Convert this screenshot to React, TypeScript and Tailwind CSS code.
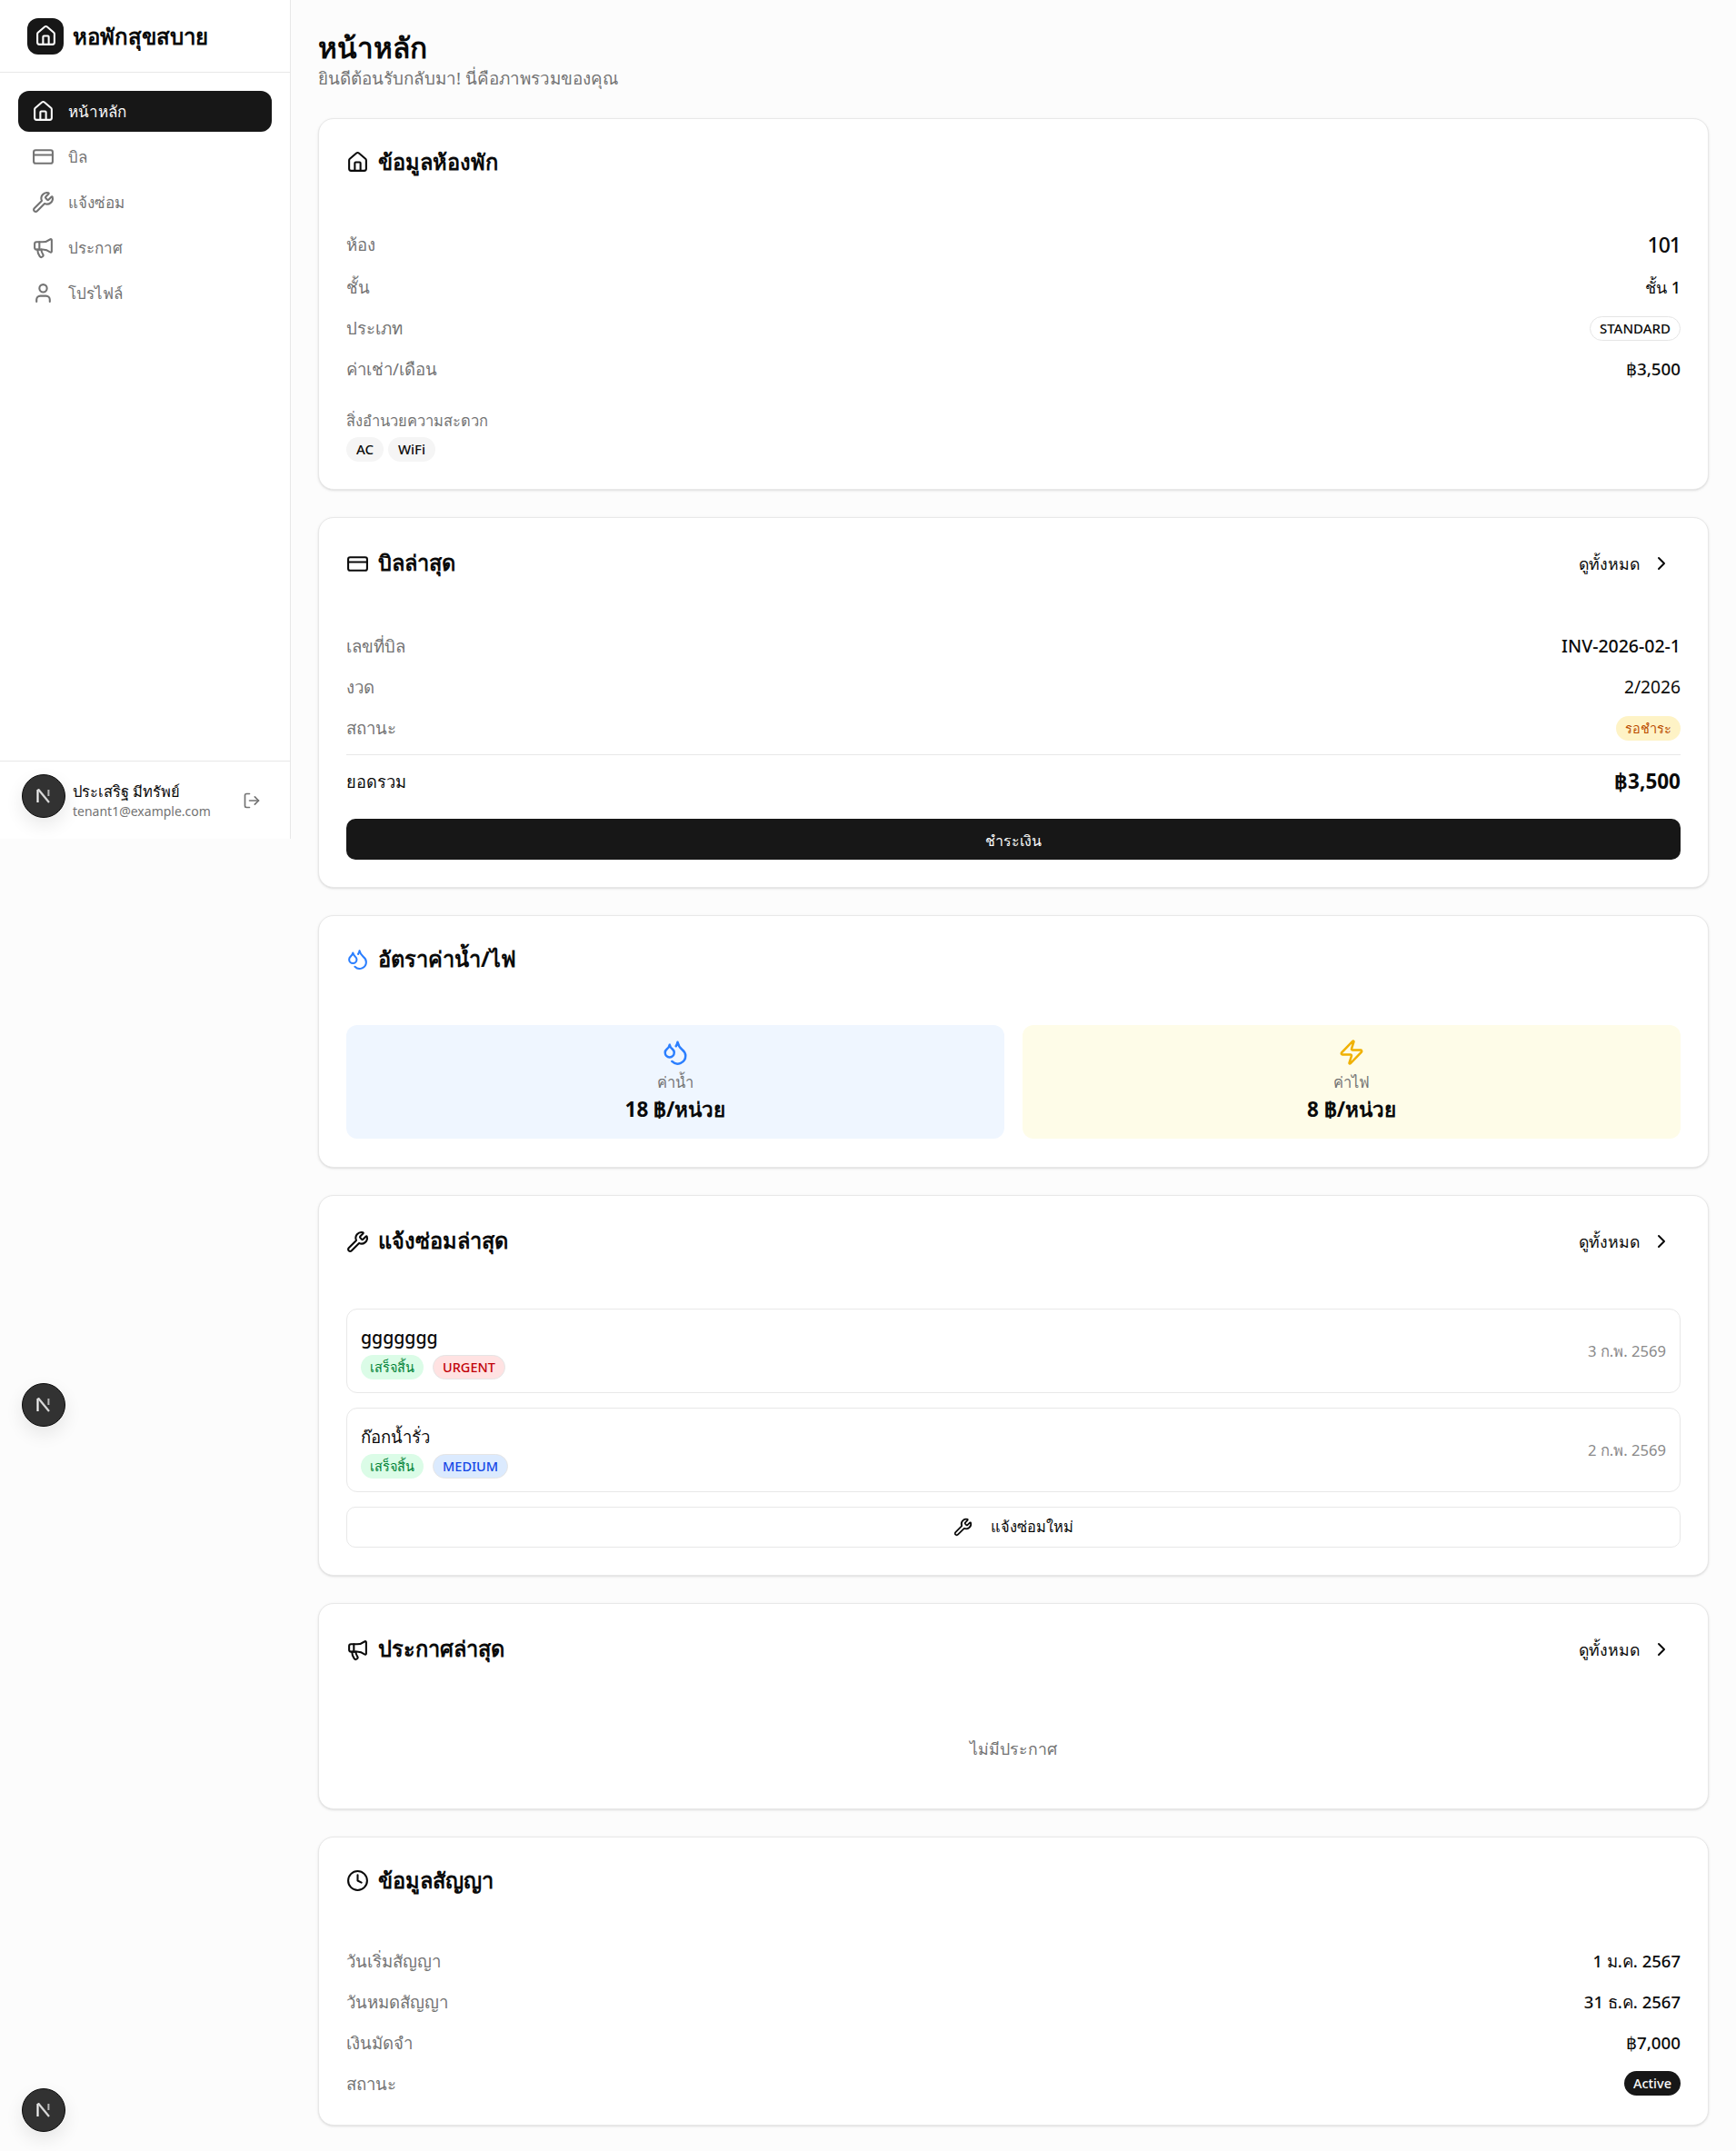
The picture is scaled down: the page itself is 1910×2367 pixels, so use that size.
import React from 'react';
import { House, CreditCard, Wrench, Megaphone, User, Droplets, Zap, Clock, ChevronRight, LogOut } from 'lucide-react';

const nav = [
  { label: 'หน้าหลัก', icon: House, active: true },
  { label: 'บิล', icon: CreditCard },
  { label: 'แจ้งซ่อม', icon: Wrench },
  { label: 'ประกาศ', icon: Megaphone },
  { label: 'โปรไฟล์', icon: User },
];

function NextBadge({ className }: { className: string }) {
  return (
    <div className={`absolute flex h-[48px] w-[48px] items-center justify-center rounded-full border border-[#0c0c0c] bg-[#323232] shadow-[0_8px_20px_rgba(0,0,0,0.09)] ${className}`}>
      <svg width="16" height="16" viewBox="0 0 16 16" fill="none">
        <path d="M1.5 1V15" stroke="#f2f2f2" strokeWidth="2.2" />
        <path d="M1.5 1.2H2.6L14 15" stroke="#d8d8d8" strokeWidth="2.2" />
        <path d="M13.4 1V8" stroke="#b5b5b5" strokeWidth="2" />
      </svg>
    </div>
  );
}

function Card({ children, className = '' }: { children: React.ReactNode; className?: string }) {
  return (
    <section className={`rounded-[17px] border border-[#e8e8e8] bg-white px-[30px] py-[30px] shadow-[0_1px_3px_rgba(0,0,0,0.1),0_1px_2px_-1px_rgba(0,0,0,0.1)] ${className}`}>
      {children}
    </section>
  );
}

function Head({ icon: Icon, title, link, iconClass = 'text-[#0a0a0a]' }: { icon: any; title: string; link?: boolean; iconClass?: string }) {
  return (
    <div className={`flex items-start justify-between ${link ? 'h-[94px]' : 'h-[90px]'}`}>
      <div className={`flex items-center gap-[10px] ${link ? 'h-[40px]' : 'h-[35px]'}`}>
        <Icon className={`h-[25px] w-[25px] ${iconClass}`} strokeWidth={2} />
        <h2 className={`text-[23.6px] font-bold leading-[35px] text-[#0a0a0a] ${link ? 'pb-[2px]' : ''}`}>{title}</h2>
      </div>
      {link && (
        <a className="flex h-[40px] items-center gap-[12px] pr-[9px] text-[17.7px] font-medium text-[#0a0a0a]">
          ดูทั้งหมด
          <ChevronRight className="h-[24px] w-[24px]" strokeWidth={2} />
        </a>
      )}
    </div>
  );
}

function Row({ label, children, h = 'h-[32px]' }: { label: string; children: React.ReactNode; h?: string }) {
  return (
    <div className={`flex items-center justify-between ${h}`}>
      <span className="text-[18.6px] text-[#737373]">{label}</span>
      {children}
    </div>
  );
}

function Pill({ children, className }: { children: React.ReactNode; className: string }) {
  return <span className={`inline-flex h-[27px] items-center justify-center rounded-full px-[10px] text-[14.5px] font-medium leading-none ${className}`}>{children}</span>;
}

function Repair({ title, titleClass, pill, pillClass, date }: { title: string; titleClass: string; pill: string; pillClass: string; date: string }) {
  return (
    <div className="flex h-[93px] items-center justify-between rounded-[12px] border border-[#e8e8e8] px-[15px]">
      <div>
        <div className={`h-[35px] pt-[1px] font-medium leading-[30px] text-[#0a0a0a] ${titleClass}`}>{title}</div>
        <div className="flex gap-[10px]">
          <Pill className="bg-green-100 text-green-700">เสร็จสิ้น</Pill>
          <Pill className={`border border-[#e5e5e5] ${pillClass}`}>{pill}</Pill>
        </div>
      </div>
      <span className="pt-[2px] text-[16.6px] text-[#8a8a8a]">{date}</span>
    </div>
  );
}

export default function App() {
  return (
    <div className="relative flex min-h-[2367px] items-start bg-[#fcfcfc] font-['Noto_Sans','Open_Sans',sans-serif] text-[#0a0a0a]">
      <aside className="flex h-[923px] w-[320px] shrink-0 flex-col border-r border-[#e8e8e8] bg-white">
        <div className="flex h-[80px] items-center gap-[10px] border-b border-[#e8e8e8] px-[30px]">
          <div className="flex h-[40px] w-[40px] items-center justify-center rounded-[12px] bg-[#171717]">
            <House className="h-[25px] w-[25px] text-white" strokeWidth={2} />
          </div>
          <span className="text-[24px] font-bold text-[#0a0a0a]">หอพักสุขสบาย</span>
        </div>
        <nav className="flex flex-1 flex-col gap-[5px] px-[20px] py-[20px]">
          {nav.map((n) => (
            <a key={n.label} className={`flex h-[45px] items-center gap-[15px] rounded-[12px] px-[15px] text-[17px] font-medium ${n.active ? 'bg-[#171717] text-[#fafafa]' : 'text-[#737373]'}`}>
              <n.icon className="h-[25px] w-[25px]" strokeWidth={2} />
              <span className="pt-[1px]">{n.label}</span>
            </a>
          ))}
        </nav>
        <div className="flex h-[86px] items-center justify-between border-t border-[#e8e8e8] pl-[80px] pr-[32px]">
          <div className="pt-[1px]">
            <div className="text-[16.5px] font-medium leading-[24px] text-[#0a0a0a]">ประเสริฐ มีทรัพย์</div>
            <div className="text-[14px] leading-[20px] text-[#737373]">tenant1@example.com</div>
          </div>
          <LogOut className="h-[20px] w-[20px] text-[#737373]" strokeWidth={2} />
        </div>
      </aside>

      <main className="min-w-0 flex-1 px-[30px] pb-[28px] pt-[29px]">
        <h1 className="h-[45px] text-[31.5px] font-bold leading-[45px] text-[#0a0a0a]">หน้าหลัก</h1>
        <p className="h-[25px] text-[18.8px] leading-[25px] text-[#737373]">ยินดีต้อนรับกลับมา! นี่คือภาพรวมของคุณ</p>

        <div className="mt-[31px] flex flex-col gap-[30px]">
          <Card>
            <Head icon={House} title="ข้อมูลห้องพัก" />
            <div className="flex flex-col gap-[13px]">
              <Row label="ห้อง" h="h-[36px]"><span className="pt-[1px] text-[23px] font-medium tracking-[-1px]">101</span></Row>
              <Row label="ชั้น"><span className="text-[18px] font-medium">ชั้น 1</span></Row>
              <Row label="ประเภท"><Pill className="w-[100px] border border-[#e5e5e5] text-[15px]">STANDARD</Pill></Row>
              <Row label="ค่าเช่า/เดือน"><span className="text-[18.8px] font-medium">฿3,500</span></Row>
            </div>
            <div className="mt-[27px] h-[27px] text-[16.5px] leading-[27px] text-[#737373]">สิ่งอำนวยความสะดวก</div>
            <div className="mt-[5px] flex gap-[5px]">
              <Pill className="w-[41px] bg-[#f5f5f5] text-[15px]">AC</Pill>
              <Pill className="w-[52px] bg-[#f5f5f5] text-[15px]">WiFi</Pill>
            </div>
          </Card>

          <Card>
            <Head icon={CreditCard} title="บิลล่าสุด" link />
            <div className="flex flex-col gap-[13px] pt-[1px]">
              <Row label="เลขที่บิล"><span className="text-[19.5px] font-medium">INV-2026-02-1</span></Row>
              <Row label="งวด"><span className="text-[19.2px]">2/2026</span></Row>
              <Row label="สถานะ"><Pill className="bg-amber-100 text-amber-700">รอชำระ</Pill></Row>
            </div>
            <div className="mt-[13px] flex h-[59px] items-center justify-between border-t border-[#e8e8e8]">
              <span className="text-[18.3px] font-medium">ยอดรวม</span>
              <span className="text-[22.5px] font-bold">฿3,500</span>
            </div>
            <button className="mt-[12px] flex h-[45px] w-full items-center justify-center rounded-[10px] bg-[#171717] pt-[2px] text-[16px] font-medium text-[#fafafa]">ชำระเงิน</button>
          </Card>

          <Card>
            <Head icon={Droplets} title="อัตราค่าน้ำ/ไฟ" iconClass="text-blue-500" />
            <div className="grid grid-cols-2 gap-[20px] pb-[1px]">
              <div className="flex h-[125px] flex-col items-center rounded-[12px] bg-blue-50 pt-[15px]">
                <Droplets className="h-[30px] w-[30px] text-blue-500" strokeWidth={2} />
                <span className="mt-[5px] text-[16.5px] leading-[25px] text-[#737373]">ค่าน้ำ</span>
                <span className="mt-[2px] text-[22.5px] font-bold leading-[32px]">18 ฿/หน่วย</span>
              </div>
              <div className="flex h-[125px] flex-col items-center rounded-[12px] bg-yellow-50 pt-[15px]">
                <Zap className="h-[30px] w-[30px] text-yellow-500" strokeWidth={2} />
                <span className="mt-[5px] text-[16.5px] leading-[25px] text-[#737373]">ค่าไฟ</span>
                <span className="mt-[2px] text-[22.5px] font-bold leading-[32px]">8 ฿/หน่วย</span>
              </div>
            </div>
          </Card>

          <Card>
            <Head icon={Wrench} title="แจ้งซ่อมล่าสุด" link />
            <div className="flex flex-col gap-[16px]">
              <Repair title="ggggggg" titleClass="text-[19.5px]" pill="URGENT" pillClass="bg-red-100 text-red-700" date="3 ก.พ. 2569" />
              <Repair title="ก๊อกน้ำรั่ว" titleClass="text-[18.5px]" pill="MEDIUM" pillClass="bg-blue-100 text-blue-700" date="2 ก.พ. 2569" />
              <button className="flex h-[45px] w-full items-center justify-center gap-[20px] rounded-[10px] border border-[#e8e8e8] bg-white text-[16.5px] font-medium">
                <Wrench className="h-[21px] w-[21px]" strokeWidth={2} />
                แจ้งซ่อมใหม่
              </button>
            </div>
          </Card>

          <Card>
            <Head icon={Megaphone} title="ประกาศล่าสุด" link />
            <div className="flex h-[71px] items-center justify-center text-[17.7px] text-[#737373]">ไม่มีประกาศ</div>
          </Card>

          <Card>
            <Head icon={Clock} title="ข้อมูลสัญญา" />
            <div className="flex flex-col gap-[13px]">
              <Row label="วันเริ่มสัญญา"><span className="text-[18.5px] font-medium">1 ม.ค. 2567</span></Row>
              <Row label="วันหมดสัญญา"><span className="text-[18.5px] font-medium">31 ธ.ค. 2567</span></Row>
              <Row label="เงินมัดจำ"><span className="text-[18.8px] font-medium">฿7,000</span></Row>
              <Row label="สถานะ" h="h-[31px]"><Pill className="bg-[#171717] text-[#fafafa]">Active</Pill></Row>
            </div>
          </Card>
        </div>
      </main>

      <NextBadge className="left-[24px] top-[852px]" />
      <NextBadge className="left-[24px] top-[1522px]" />
      <NextBadge className="left-[24px] top-[2298px]" />
    </div>
  );
}
